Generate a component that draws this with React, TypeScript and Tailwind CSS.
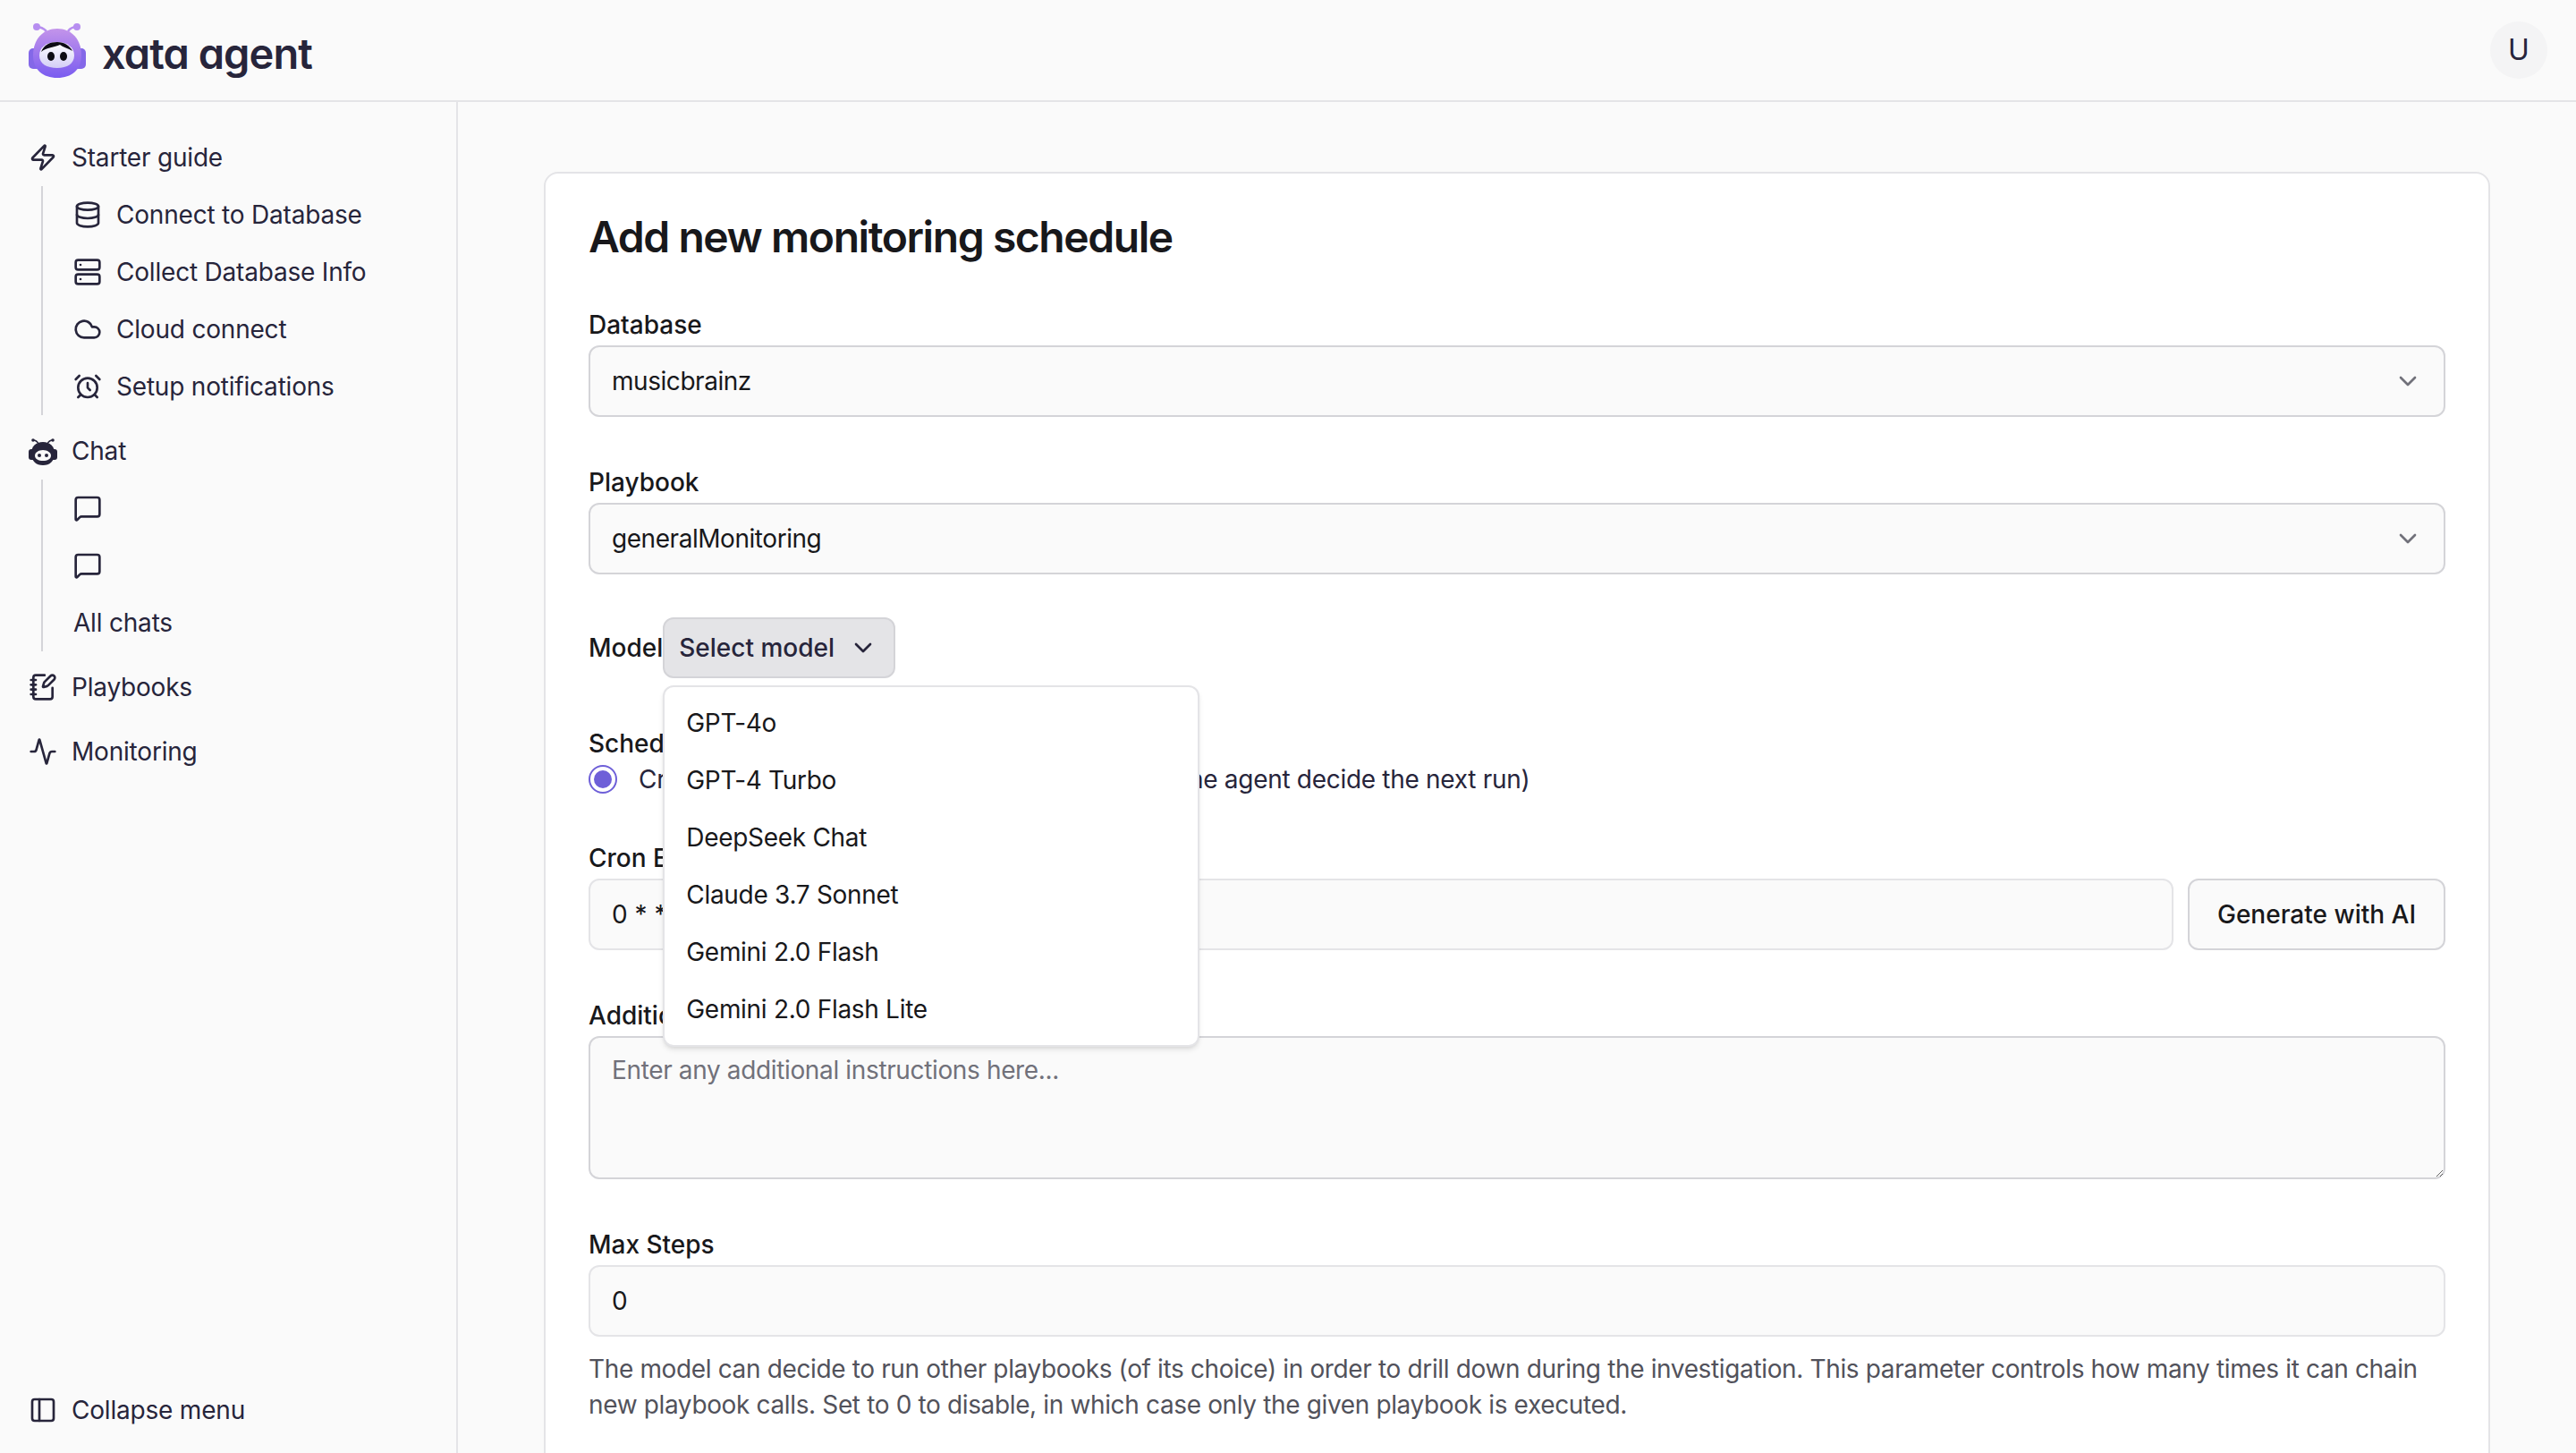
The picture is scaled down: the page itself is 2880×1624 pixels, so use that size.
import {
  Activity,
  AlarmClock,
  ChevronDown,
  Cloud,
  Database,
  MessageSquare,
  NotebookPen,
  PanelLeft,
  Server,
  Zap,
} from "lucide-react";
import type { ReactNode } from "react";

const models = ["GPT-4o", "GPT-4 Turbo", "DeepSeek Chat", "Claude 3.7 Sonnet", "Gemini 2.0 Flash", "Gemini 2.0 Flash Lite"];

function Logo() {
  return (
    <svg width="64" height="64" viewBox="0 0 64 64" className="shrink-0">
      <defs>
        <linearGradient id="dome" x1="0" y1="0" x2="0" y2="1">
          <stop offset="0" stopColor="#c394ea" />
          <stop offset="1" stopColor="#7a5cf0" />
        </linearGradient>
        <linearGradient id="face" x1="0" y1="0" x2="0" y2="1">
          <stop offset="0" stopColor="#ffffff" />
          <stop offset="1" stopColor="#d3cef6" />
        </linearGradient>
      </defs>
      <path d="M9 6C14 6 17 8 20 11M54 6C49 6 46 8 44 11" fill="none" stroke="#b78ef0" strokeWidth="2.5" />
      <circle cx="9" cy="6" r="4" fill="#b78ef0" />
      <circle cx="54" cy="6" r="4" fill="#b78ef0" />
      <rect x="0" y="30" width="64" height="23" rx="5" fill="#8468e8" />
      <path d="M5 38C5 20 16 8 32 8C48 8 59 20 59 38C59 54 48 63 32 63C16 63 5 54 5 38Z" fill="url(#dome)" />
      <path d="M12 38C12 29 20 23 32 23C43 23 51 29 51 38C51 47 43 52 32 52C20 52 12 47 12 38Z" fill="url(#face)" />
      <path d="M14 34C17 26 24 23 32 23C40 23 46 27 49 33C44 30 39 29 35 26C29 29 20 29 14 34Z" fill="#0d0b14" />
      <ellipse cx="25" cy="39" rx="4" ry="5" fill="#0d0b14" />
      <ellipse cx="39" cy="39" rx="4" ry="5" fill="#0d0b14" />
    </svg>
  );
}

function ChatBot() {
  return (
    <svg width="32" height="32" viewBox="0 0 32 32" className="shrink-0">
      <path d="M5 4C8 4 10 6 11 8M27 4C24 4 22 6 21 8" fill="none" stroke="#27253b" strokeWidth="1.6" />
      <circle cx="5" cy="4" r="1.8" fill="#27253b" />
      <circle cx="27" cy="4" r="1.8" fill="#27253b" />
      <rect x="0" y="14" width="32" height="12" rx="3" fill="#27253b" />
      <path d="M3 19C3 11 8 6 16 6C24 6 29 11 29 19C29 27 24 32 16 32C8 32 3 27 3 19Z" fill="#27253b" />
      <path d="M7 21C7 18 11 15 16 15C21 15 25 18 25 21C25 25 21 27 16 27C11 27 7 25 7 21Z" fill="#fafafa" />
      <circle cx="12" cy="21" r="2" fill="#27253b" />
      <circle cx="20" cy="21" r="2" fill="#27253b" />
    </svg>
  );
}

function NavItem({ icon, label, sub }: { icon?: ReactNode; label?: string; sub?: boolean }) {
  return (
    <div className={`flex h-16 items-center gap-4 text-[28px] tracking-[-0.2px] text-[#27253b] ${sub ? "pl-[34px]" : "pl-8"}`}>
      {icon}
      {label && <span>{label}</span>}
    </div>
  );
}

function Field({ label, mt, children }: { label: string; mt: string; children: ReactNode }) {
  return (
    <div className={mt}>
      <div className="mb-[9px] text-[28px] leading-[28px] font-medium text-[#18181b]">{label}</div>
      {children}
    </div>
  );
}

function SelectBox({ value }: { value: string }) {
  return (
    <div className="flex h-20 items-center justify-between rounded-xl border-2 border-[#d4d4d8] bg-[#fafafa] px-[24px] text-[28px] tracking-[-0.45px] text-[#18181b]">
      <span>{value}</span>
      <ChevronDown size={32} className="text-[#71717a]" />
    </div>
  );
}

export default function App() {
  return (
    <div className="flex h-[1624px] w-[2880px] flex-col overflow-hidden bg-[#fafafa] font-['Inter',sans-serif]">
      <header className="flex h-[114px] shrink-0 items-center justify-between border-b-2 border-[#e4e4e7] pl-8 pr-8">
        <div className="flex items-center gap-[18px]">
          <Logo />
          <span className="mt-[6px] text-[47px] leading-none font-semibold tracking-[-0.02em] text-[#27253b] [font-feature-settings:'cv11']">
            xata agent
          </span>
        </div>
        <div className="flex h-16 w-16 items-center justify-center rounded-full bg-[#f4f4f5] text-[32px] text-[#27253b]">
          U
        </div>
      </header>

      <div className="flex min-h-0 flex-1">
        <aside className="flex w-[512px] shrink-0 flex-col justify-between border-r-2 border-[#e4e4e7] pt-[30px] pb-4">
          <nav className="flex flex-col gap-2">
            <div>
              <NavItem icon={<Zap size={32} className="shrink-0" />} label="Starter guide" />
              <div className="ml-[46px] border-l-2 border-[#d4d4d8]">
                <NavItem sub icon={<Database size={32} />} label="Connect to Database" />
                <NavItem sub icon={<Server size={32} />} label="Collect Database Info" />
                <NavItem sub icon={<Cloud size={32} />} label="Cloud connect" />
                <NavItem sub icon={<AlarmClock size={32} />} label="Setup notifications" />
              </div>
            </div>
            <div>
              <NavItem icon={<ChatBot />} label="Chat" />
              <div className="ml-[46px] border-l-2 border-[#d4d4d8]">
                <NavItem sub icon={<MessageSquare size={32} />} />
                <NavItem sub icon={<MessageSquare size={32} />} />
                <NavItem sub label="All chats" />
              </div>
            </div>
            <NavItem icon={<NotebookPen size={32} />} label="Playbooks" />
            <NavItem icon={<Activity size={32} />} label="Monitoring" />
          </nav>
          <NavItem icon={<PanelLeft size={32} />} label="Collapse menu" />
        </aside>

        <main className="min-w-0 flex-1 overflow-hidden px-24 pt-[78px]">
          <div className="rounded-2xl border-2 border-[#e4e4e7] bg-white px-12 pt-[39px] pb-12">
            <h1 className="text-[48px] leading-[64px] font-semibold tracking-[-0.03em] text-[#18181b]">
              Add new monitoring schedule
            </h1>

            <Field label="Database" mt="mt-[52px]">
              <SelectBox value="musicbrainz" />
            </Field>

            <Field label="Playbook" mt="mt-[59px]">
              <SelectBox value="generalMonitoring" />
            </Field>

            {/* Model picker with its open menu */}
            <div className="mt-[48px] flex items-center text-[28px] font-medium text-[#18181b]">
              <span>Model</span>
              <div className="relative">
                <button className="flex h-[68px] w-[260px] items-center gap-[16px] rounded-xl border-2 border-[#d4d4d8] bg-[#e4e4e7] pl-[16px] text-[#27253b]">
                  Select model
                  <ChevronDown size={32} />
                </button>
                <div className="absolute top-[76px] left-0 z-10 w-[600px] rounded-xl border-2 border-[#e4e4e7] bg-white p-2 font-normal tracking-[-0.3px] shadow-md">
                  {models.map((model) => (
                    <div key={model} className="flex h-16 items-center px-4 text-[#18181b]">
                      {model}
                    </div>
                  ))}
                </div>
              </div>
            </div>

            <div className="mt-[59px]">
              <div className="text-[28px] leading-[28px] font-medium text-[#18181b]">Schedule Type</div>
              <div className="mt-[10px] flex h-8 items-center text-[28px] tracking-[-0.3px] text-[#27253b]">
                <span className="flex h-8 w-8 items-center justify-center rounded-full border-2 border-[#6e5fd8]">
                  <span className="h-5 w-5 rounded-full bg-[#6e5fd8]" />
                </span>
                <span className="ml-6">Cron</span>
                <span className="ml-[356px]">Automatic (let the agent decide the next run)</span>
              </div>
            </div>

            <Field label="Cron Expression" mt="mt-[58px]">
              <div className="flex gap-4">
                <input
                  readOnly
                  value="0 * * * *"
                  className="h-20 min-w-0 flex-1 rounded-xl border-2 border-[#e4e4e7] bg-[#fafafa] px-[24px] text-[28px] text-[#18181b] outline-none"
                />
                <button className="h-20 w-[288px] shrink-0 rounded-xl border-2 border-[#d4d4d8] bg-[#fafafa] text-[28px] font-medium text-[#18181b]">
                  Generate with AI
                </button>
              </div>
            </Field>

            <Field label="Additional Instructions" mt="mt-[59px]">
              <textarea
                readOnly
                placeholder="Enter any additional instructions here..."
                className="block h-40 w-full rounded-xl border-2 border-[#d4d4d8] bg-[#fafafa] px-[24px] py-[18px] text-[28px] leading-[36px] tracking-[-0.36px] outline-none placeholder:text-[#71717a]"
              />
            </Field>

            <Field label="Max Steps" mt="mt-[59px]">
              <input
                readOnly
                value="0"
                className="h-20 w-full rounded-xl border-2 border-[#e4e4e7] bg-[#fafafa] px-[24px] text-[28px] text-[#18181b] outline-none"
              />
            </Field>

            <p className="mt-[16px] text-[28px] leading-[40px] tracking-[-0.36px] text-[#52525b]">
              The model can decide to run other playbooks (of its choice) in order to drill down during the investigation. This parameter controls how many times it can chain new playbook calls. Set to 0 to disable, in which case only the given playbook is executed.
            </p>
          </div>
        </main>
      </div>
    </div>
  );
}
